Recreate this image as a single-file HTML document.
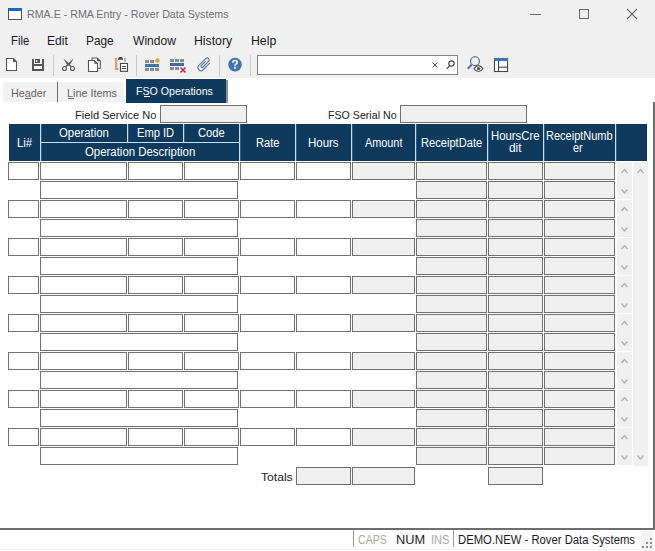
<!DOCTYPE html><html><head><meta charset='utf-8'><style>
*{margin:0;padding:0;box-sizing:border-box}
html,body{width:655px;height:551px;overflow:hidden;background:#fff;font-family:"Liberation Sans", sans-serif;}
.a{position:absolute}
.t{position:absolute;white-space:nowrap;line-height:1;transform-origin:0 0}
.inp{position:absolute;height:18px;border:1px solid #727272;background:#fff}
.g{background:#f0f0f0}
</style></head><body>
<div class='a' style='left:0;top:0;width:655px;height:78px;background:#f0f0f0'></div>
<div class='a' style='left:8px;top:8px;width:14px;height:12px;border:1px solid #555;border-top:3px solid #1f66c8;background:#fff'></div>
<div class='t' style='left:26.99px;top:8.51px;font-size:11.8px;color:#707070;transform:scaleX(0.9044);'>RMA.E - RMA Entry - Rover Data Systems</div>
<div class='a' style='left:530px;top:14px;width:11px;height:1px;background:#6a6a6a'></div>
<div class='a' style='left:579px;top:9px;width:10px;height:10px;border:1px solid #6a6a6a'></div>
<svg class='a' style='left:626px;top:8px' width='12' height='12'><path d='M1 1L11 11M11 1L1 11' stroke='#6a6a6a' stroke-width='1.1'/></svg>
<div class='t' style='left:10.89px;top:34.64px;font-size:12.0px;color:#1b1b1b;transform:scaleX(0.9472);'>File</div>
<div class='t' style='left:47.37px;top:34.64px;font-size:12.0px;color:#1b1b1b;transform:scaleX(1.0074);'>Edit</div>
<div class='t' style='left:85.90px;top:34.64px;font-size:12.0px;color:#1b1b1b;transform:scaleX(0.9876);'>Page</div>
<div class='t' style='left:132.62px;top:34.64px;font-size:12.0px;color:#1b1b1b;transform:scaleX(1.0063);'>Window</div>
<div class='t' style='left:194.26px;top:34.64px;font-size:12.0px;color:#1b1b1b;transform:scaleX(1.0222);'>History</div>
<div class='t' style='left:251.36px;top:34.64px;font-size:12.0px;color:#1b1b1b;transform:scaleX(1.0235);'>Help</div>

<svg class='a' style='left:0;top:50px' width='520' height='28' viewBox='0 50 520 28'>
 <!-- new doc -->
 <path d='M6.5 58.5H13.3L16.5 61.7V70.5H6.5Z' fill='#fff' stroke='#555' stroke-width='1.1'/>
 <path d='M13 58.5V62H16.5Z' fill='#555'/>
 <!-- save -->
 <rect x='32' y='59' width='12' height='12' fill='#555'/>
 <rect x='34' y='59' width='8' height='5' fill='#fff'/>
 <rect x='35' y='59' width='5' height='4' fill='#555'/>
 <rect x='36' y='60' width='1.2' height='2' fill='#fff'/>
 <rect x='34' y='66' width='8' height='3' fill='#fff'/>
 <!-- sep -->
 <rect x='53' y='55' width='1' height='21' fill='#c9c9c9'/>
 <!-- scissors -->
 <path d='M63.4 58.6L66.8 61.6L71.6 66L70.6 67L66.3 63.6Z' fill='#555'/>
 <path d='M73.6 58.6L70.2 61.6L65.4 66L66.4 67L70.7 63.6Z' fill='#555'/>
 <circle cx='64.5' cy='68.5' r='2' fill='none' stroke='#555' stroke-width='1.1'/>
 <circle cx='72.5' cy='68.5' r='2' fill='none' stroke='#555' stroke-width='1.1'/>
 <!-- copy -->
 <path d='M92 58H97.2L100.3 61.1V68.3H92Z' fill='#fff' stroke='#555' stroke-width='1.1'/>
 <path d='M97 58V61.3H100.3Z' fill='#555'/>
 <path d='M88.5 60.5H94.5L97.5 63.5V71.5H88.5Z' fill='#fff' stroke='#555' stroke-width='1.1'/>
 <path d='M94.3 60.5V63.7H97.5Z' fill='#555'/>
 <!-- paste -->
 <path d='M115 58H117.3V68H118.7V70H115Z' fill='#dba467'/>
 <rect x='124' y='58' width='2' height='4' fill='#d9b070'/>
 <path d='M118 59.8V58.5L119.2 57.1H121.8L123 58.5V59.8Z' fill='#454545'/>
 <rect x='120.5' y='63.5' width='7' height='7.8' fill='#fff' stroke='#3d4550' stroke-width='1.1'/>
 <rect x='122' y='66' width='4' height='1' fill='#4a4030'/>
 <rect x='122' y='68' width='4' height='1' fill='#4a4030'/>
 <!-- sep -->
 <rect x='136' y='55' width='1' height='21' fill='#c9c9c9'/>
 <!-- insert row -->
 <rect x='145' y='60' width='4' height='3' fill='#8c8c8c'/>
 <rect x='150' y='60' width='4' height='3' fill='#8c8c8c'/>
 <circle cx='157.5' cy='60.5' r='2.2' fill='#d4a84a'/>
 <rect x='145' y='64' width='14' height='3' fill='#3b75b5'/>
 <rect x='145' y='68' width='4' height='3' fill='#8c8c8c'/>
 <rect x='150' y='68' width='4' height='3' fill='#8c8c8c'/>
 <rect x='155' y='68' width='4' height='3' fill='#8c8c8c'/>
 <!-- delete row -->
 <rect x='170' y='59' width='4' height='3' fill='#8c8c8c'/>
 <rect x='175' y='59' width='4' height='3' fill='#8c8c8c'/>
 <rect x='180' y='59' width='4' height='3' fill='#8c8c8c'/>
 <rect x='170' y='63' width='14' height='3' fill='#3b6aa8'/>
 <rect x='170' y='67' width='4' height='3' fill='#8c8c8c'/>
 <rect x='175' y='67' width='4' height='3' fill='#8c8c8c'/>
 <path d='M180.5 67.5L185.5 72.5M185.5 67.5L180.5 72.5' stroke='#c42a40' stroke-width='1.6'/>
 <!-- paperclip -->
 <g transform='translate(204.2,64.3) rotate(-45)'>
  <path d='M-4.6 -3H5.1A2 2 0 0 1 5.1 1H-4.6Z' fill='#e3eefa'/>
  <path d='M5 3.1H-4.6A3.05 3.05 0 0 1 -4.6 -3H5.1A2 2 0 0 1 5.1 1H-2.8A1.1 1.1 0 0 1 -2.8 -1.2H3' fill='none' stroke='#63799a' stroke-width='1.15'/>
 </g>
 <!-- sep -->
 <rect x='219' y='55' width='1' height='21' fill='#c9c9c9'/>
 <!-- help -->
 <circle cx='235' cy='64.6' r='6.8' fill='#3f73b6'/>
 <path d='M232.8 62.6Q232.9 60.5 235 60.5Q237.2 60.5 237.2 62.4Q237.2 63.5 236 64.1Q235.1 64.6 235.1 65.8' fill='none' stroke='#fff' stroke-width='1.7'/>
 <rect x='234.1' y='66.8' width='2' height='1.9' fill='#fff'/>
 <!-- sep -->
 <rect x='250' y='55' width='1' height='21' fill='#c9c9c9'/>
 <!-- search box -->
 <rect x='257.5' y='55.5' width='200' height='19' fill='#fff' stroke='#858585' stroke-width='1'/>
 <path d='M432.5 62.5L437.5 67.5M437.5 62.5L432.5 67.5' stroke='#555' stroke-width='1'/>
 <circle cx='451.5' cy='63.6' r='2.7' fill='none' stroke='#444' stroke-width='1.1'/>
 <path d='M449.5 65.8L446.6 68.8' stroke='#444' stroke-width='1.2'/>
 <!-- search eye -->
 <circle cx='475' cy='61.2' r='4.4' fill='#eef4fb' stroke='#606060' stroke-width='1.1'/>
 <path d='M471.6 64.8L467.8 68.8' stroke='#4a70a6' stroke-width='2'/>
 <path d='M474 68.6Q478.5 62.6 483 68.6Q478.5 74.4 474 68.6Z' fill='#fff' stroke='#555' stroke-width='1.1'/>
 <circle cx='478.5' cy='68.6' r='1.7' fill='#555'/>
 <!-- layout -->
 <rect x='494.5' y='58.5' width='13' height='13' fill='#fff' stroke='#454545' stroke-width='1.1'/>
 <rect x='494' y='58' width='14' height='3' fill='#3b75b5'/>
 <rect x='498' y='61' width='1.1' height='10' fill='#454545'/>
 <rect x='499' y='66.6' width='9' height='1.1' fill='#454545'/>
</svg>

<div class='a' style='left:0;top:78px;width:655px;height:450px;background:#fff'></div>
<div class='a' style='left:3px;top:82px;width:54px;height:20px;background:#f2f2f2'></div>
<div class='a' style='left:57px;top:82px;width:1px;height:20px;background:#6a6a6a'></div>
<div class='a' style='left:58px;top:82px;width:66px;height:20px;background:#f2f2f2'></div>
<div class='t' style='left:10.60px;top:87.86px;font-size:11.5px;color:#646464;transform:scaleX(0.9384);'>Header</div>
<div class='t' style='left:66.70px;top:88.16px;font-size:11.5px;color:#646464;transform:scaleX(0.9398);'>Line Items</div>
<div class='a' style='left:25px;top:98px;width:6px;height:1px;background:#646464'></div>
<div class='a' style='left:68px;top:98px;width:6px;height:1px;background:#646464'></div>
<div class='a' style='left:226px;top:80px;width:2px;height:23px;background:#8a939c'></div>
<div class='a' style='left:126px;top:79px;width:100px;height:24px;background:#0f3a5e'></div>
<div class='t' style='left:135.99px;top:86.46px;font-size:11.5px;color:#ffffff;transform:scaleX(0.9252);'>FSO Operations</div>
<div class='a' style='left:144px;top:96px;width:6px;height:1px;background:#fff'></div>
<div class='t' style='left:74.98px;top:110.06px;font-size:11.5px;color:#222222;transform:scaleX(0.9652);'>Field Service No</div>
<div class='inp g' style='left:160px;top:105px;width:87px;height:18px'></div>
<div class='t' style='left:327.71px;top:109.96px;font-size:11.5px;color:#222222;transform:scaleX(0.9249);'>FSO Serial No</div>
<div class='inp g' style='left:400px;top:105px;width:127px;height:18px'></div>
<div class='a' style='left:9px;top:124px;width:638px;height:37px;background:#0f3a5e'></div>
<div class='a' style='left:40px;top:124px;width:1px;height:37px;background:#c8e0f4'></div><div class='a' style='left:41px;top:124px;width:1px;height:37px;background:#2f5d88'></div>
<div class='a' style='left:239px;top:124px;width:1px;height:37px;background:#c8e0f4'></div><div class='a' style='left:240px;top:124px;width:1px;height:37px;background:#2f5d88'></div>
<div class='a' style='left:295px;top:124px;width:1px;height:37px;background:#c8e0f4'></div><div class='a' style='left:296px;top:124px;width:1px;height:37px;background:#2f5d88'></div>
<div class='a' style='left:351px;top:124px;width:1px;height:37px;background:#c8e0f4'></div><div class='a' style='left:352px;top:124px;width:1px;height:37px;background:#2f5d88'></div>
<div class='a' style='left:415px;top:124px;width:1px;height:37px;background:#c8e0f4'></div><div class='a' style='left:416px;top:124px;width:1px;height:37px;background:#2f5d88'></div>
<div class='a' style='left:487px;top:124px;width:1px;height:37px;background:#c8e0f4'></div><div class='a' style='left:488px;top:124px;width:1px;height:37px;background:#2f5d88'></div>
<div class='a' style='left:543px;top:124px;width:1px;height:37px;background:#c8e0f4'></div><div class='a' style='left:544px;top:124px;width:1px;height:37px;background:#2f5d88'></div>
<div class='a' style='left:615px;top:124px;width:1px;height:37px;background:#c8e0f4'></div><div class='a' style='left:616px;top:124px;width:1px;height:37px;background:#2f5d88'></div>
<div class='a' style='left:127px;top:124px;width:1px;height:18px;background:#c8e0f4'></div><div class='a' style='left:128px;top:124px;width:1px;height:18px;background:#2f5d88'></div>
<div class='a' style='left:183px;top:124px;width:1px;height:18px;background:#c8e0f4'></div><div class='a' style='left:184px;top:124px;width:1px;height:18px;background:#2f5d88'></div>
<div class='a' style='left:40px;top:142px;width:200px;height:1px;background:#c8e0f4'></div>
<div class='t' style='left:16.90px;top:136.59px;font-size:12.3px;color:#ffffff;transform:scaleX(0.9207);'>Li#</div>
<div class='t' style='left:58.52px;top:126.79px;font-size:12.3px;color:#ffffff;transform:scaleX(0.9249);'>Operation</div>
<div class='t' style='left:136.51px;top:126.79px;font-size:12.3px;color:#ffffff;transform:scaleX(0.9055);'>Emp ID</div>
<div class='t' style='left:197.60px;top:126.79px;font-size:12.3px;color:#ffffff;transform:scaleX(0.9098);'>Code</div>
<div class='t' style='left:84.61px;top:145.79px;font-size:12.3px;color:#ffffff;transform:scaleX(0.9272);'>Operation Description</div>
<div class='t' style='left:255.52px;top:137.39px;font-size:12.3px;color:#ffffff;transform:scaleX(0.8987);'>Rate</div>
<div class='t' style='left:308.13px;top:137.39px;font-size:12.3px;color:#ffffff;transform:scaleX(0.9326);'>Hours</div>
<div class='t' style='left:364.71px;top:137.39px;font-size:12.3px;color:#ffffff;transform:scaleX(0.8830);'>Amount</div>
<div class='t' style='left:420.91px;top:137.09px;font-size:12.3px;color:#ffffff;transform:scaleX(0.9045);'>ReceiptDate</div>
<div class='t' style='left:490.69px;top:129.59px;font-size:12.3px;color:#ffffff;transform:scaleX(0.9222);'>HoursCre</div>
<div class='t' style='left:508.64px;top:141.59px;font-size:12.3px;color:#ffffff;transform:scaleX(0.9621);'>dit</div>
<div class='t' style='left:545.53px;top:129.59px;font-size:12.3px;color:#ffffff;transform:scaleX(0.8947);'>ReceiptNumb</div>
<div class='t' style='left:573.40px;top:141.59px;font-size:12.3px;color:#ffffff;transform:scaleX(0.8711);'>er</div>
<div class='inp' style='left:8px;top:162px;width:31px'></div>
<div class='inp' style='left:40px;top:162px;width:87px'></div>
<div class='inp' style='left:128px;top:162px;width:55px'></div>
<div class='inp' style='left:184px;top:162px;width:55px'></div>
<div class='inp' style='left:240px;top:162px;width:55px'></div>
<div class='inp' style='left:296px;top:162px;width:55px'></div>
<div class='inp g' style='left:352px;top:162px;width:63px'></div>
<div class='inp g' style='left:416px;top:162px;width:71px'></div>
<div class='inp g' style='left:488px;top:162px;width:55px'></div>
<div class='inp g' style='left:544px;top:162px;width:71px'></div>
<div class='inp' style='left:40px;top:181px;width:198px'></div>
<div class='inp g' style='left:416px;top:181px;width:71px'></div>
<div class='inp g' style='left:488px;top:181px;width:55px'></div>
<div class='inp g' style='left:544px;top:181px;width:71px'></div>
<div class='inp' style='left:8px;top:200px;width:31px'></div>
<div class='inp' style='left:40px;top:200px;width:87px'></div>
<div class='inp' style='left:128px;top:200px;width:55px'></div>
<div class='inp' style='left:184px;top:200px;width:55px'></div>
<div class='inp' style='left:240px;top:200px;width:55px'></div>
<div class='inp' style='left:296px;top:200px;width:55px'></div>
<div class='inp g' style='left:352px;top:200px;width:63px'></div>
<div class='inp g' style='left:416px;top:200px;width:71px'></div>
<div class='inp g' style='left:488px;top:200px;width:55px'></div>
<div class='inp g' style='left:544px;top:200px;width:71px'></div>
<div class='inp' style='left:40px;top:219px;width:198px'></div>
<div class='inp g' style='left:416px;top:219px;width:71px'></div>
<div class='inp g' style='left:488px;top:219px;width:55px'></div>
<div class='inp g' style='left:544px;top:219px;width:71px'></div>
<div class='inp' style='left:8px;top:238px;width:31px'></div>
<div class='inp' style='left:40px;top:238px;width:87px'></div>
<div class='inp' style='left:128px;top:238px;width:55px'></div>
<div class='inp' style='left:184px;top:238px;width:55px'></div>
<div class='inp' style='left:240px;top:238px;width:55px'></div>
<div class='inp' style='left:296px;top:238px;width:55px'></div>
<div class='inp g' style='left:352px;top:238px;width:63px'></div>
<div class='inp g' style='left:416px;top:238px;width:71px'></div>
<div class='inp g' style='left:488px;top:238px;width:55px'></div>
<div class='inp g' style='left:544px;top:238px;width:71px'></div>
<div class='inp' style='left:40px;top:257px;width:198px'></div>
<div class='inp g' style='left:416px;top:257px;width:71px'></div>
<div class='inp g' style='left:488px;top:257px;width:55px'></div>
<div class='inp g' style='left:544px;top:257px;width:71px'></div>
<div class='inp' style='left:8px;top:276px;width:31px'></div>
<div class='inp' style='left:40px;top:276px;width:87px'></div>
<div class='inp' style='left:128px;top:276px;width:55px'></div>
<div class='inp' style='left:184px;top:276px;width:55px'></div>
<div class='inp' style='left:240px;top:276px;width:55px'></div>
<div class='inp' style='left:296px;top:276px;width:55px'></div>
<div class='inp g' style='left:352px;top:276px;width:63px'></div>
<div class='inp g' style='left:416px;top:276px;width:71px'></div>
<div class='inp g' style='left:488px;top:276px;width:55px'></div>
<div class='inp g' style='left:544px;top:276px;width:71px'></div>
<div class='inp' style='left:40px;top:295px;width:198px'></div>
<div class='inp g' style='left:416px;top:295px;width:71px'></div>
<div class='inp g' style='left:488px;top:295px;width:55px'></div>
<div class='inp g' style='left:544px;top:295px;width:71px'></div>
<div class='inp' style='left:8px;top:314px;width:31px'></div>
<div class='inp' style='left:40px;top:314px;width:87px'></div>
<div class='inp' style='left:128px;top:314px;width:55px'></div>
<div class='inp' style='left:184px;top:314px;width:55px'></div>
<div class='inp' style='left:240px;top:314px;width:55px'></div>
<div class='inp' style='left:296px;top:314px;width:55px'></div>
<div class='inp g' style='left:352px;top:314px;width:63px'></div>
<div class='inp g' style='left:416px;top:314px;width:71px'></div>
<div class='inp g' style='left:488px;top:314px;width:55px'></div>
<div class='inp g' style='left:544px;top:314px;width:71px'></div>
<div class='inp' style='left:40px;top:333px;width:198px'></div>
<div class='inp g' style='left:416px;top:333px;width:71px'></div>
<div class='inp g' style='left:488px;top:333px;width:55px'></div>
<div class='inp g' style='left:544px;top:333px;width:71px'></div>
<div class='inp' style='left:8px;top:352px;width:31px'></div>
<div class='inp' style='left:40px;top:352px;width:87px'></div>
<div class='inp' style='left:128px;top:352px;width:55px'></div>
<div class='inp' style='left:184px;top:352px;width:55px'></div>
<div class='inp' style='left:240px;top:352px;width:55px'></div>
<div class='inp' style='left:296px;top:352px;width:55px'></div>
<div class='inp g' style='left:352px;top:352px;width:63px'></div>
<div class='inp g' style='left:416px;top:352px;width:71px'></div>
<div class='inp g' style='left:488px;top:352px;width:55px'></div>
<div class='inp g' style='left:544px;top:352px;width:71px'></div>
<div class='inp' style='left:40px;top:371px;width:198px'></div>
<div class='inp g' style='left:416px;top:371px;width:71px'></div>
<div class='inp g' style='left:488px;top:371px;width:55px'></div>
<div class='inp g' style='left:544px;top:371px;width:71px'></div>
<div class='inp' style='left:8px;top:390px;width:31px'></div>
<div class='inp' style='left:40px;top:390px;width:87px'></div>
<div class='inp' style='left:128px;top:390px;width:55px'></div>
<div class='inp' style='left:184px;top:390px;width:55px'></div>
<div class='inp' style='left:240px;top:390px;width:55px'></div>
<div class='inp' style='left:296px;top:390px;width:55px'></div>
<div class='inp g' style='left:352px;top:390px;width:63px'></div>
<div class='inp g' style='left:416px;top:390px;width:71px'></div>
<div class='inp g' style='left:488px;top:390px;width:55px'></div>
<div class='inp g' style='left:544px;top:390px;width:71px'></div>
<div class='inp' style='left:40px;top:409px;width:198px'></div>
<div class='inp g' style='left:416px;top:409px;width:71px'></div>
<div class='inp g' style='left:488px;top:409px;width:55px'></div>
<div class='inp g' style='left:544px;top:409px;width:71px'></div>
<div class='inp' style='left:8px;top:428px;width:31px'></div>
<div class='inp' style='left:40px;top:428px;width:87px'></div>
<div class='inp' style='left:128px;top:428px;width:55px'></div>
<div class='inp' style='left:184px;top:428px;width:55px'></div>
<div class='inp' style='left:240px;top:428px;width:55px'></div>
<div class='inp' style='left:296px;top:428px;width:55px'></div>
<div class='inp g' style='left:352px;top:428px;width:63px'></div>
<div class='inp g' style='left:416px;top:428px;width:71px'></div>
<div class='inp g' style='left:488px;top:428px;width:55px'></div>
<div class='inp g' style='left:544px;top:428px;width:71px'></div>
<div class='inp' style='left:40px;top:447px;width:198px'></div>
<div class='inp g' style='left:416px;top:447px;width:71px'></div>
<div class='inp g' style='left:488px;top:447px;width:55px'></div>
<div class='inp g' style='left:544px;top:447px;width:71px'></div>
<div class='a' style='left:617px;top:162px;width:15px;height:37px;background:#f0f0f0'></div>
<div class='a' style='left:617px;top:200px;width:15px;height:37px;background:#f0f0f0'></div>
<div class='a' style='left:617px;top:238px;width:15px;height:37px;background:#f0f0f0'></div>
<div class='a' style='left:617px;top:276px;width:15px;height:37px;background:#f0f0f0'></div>
<div class='a' style='left:617px;top:314px;width:15px;height:37px;background:#f0f0f0'></div>
<div class='a' style='left:617px;top:352px;width:15px;height:37px;background:#f0f0f0'></div>
<div class='a' style='left:617px;top:390px;width:15px;height:37px;background:#f0f0f0'></div>
<div class='a' style='left:617px;top:428px;width:15px;height:37px;background:#f0f0f0'></div>
<div class='a' style='left:633px;top:162px;width:15px;height:304px;background:#f0f0f0'></div>
<svg class='a' style='left:0;top:0' width='655' height='551'><g fill='none' stroke='#b0b0b0' stroke-width='1.4'><path d='M621.5 173L624.5 169.5L627.5 173' /><path d='M621.5 189.5L624.5 193L627.5 189.5' /><path d='M621.5 211L624.5 207.5L627.5 211' /><path d='M621.5 227.5L624.5 231L627.5 227.5' /><path d='M621.5 249L624.5 245.5L627.5 249' /><path d='M621.5 265.5L624.5 269L627.5 265.5' /><path d='M621.5 287L624.5 283.5L627.5 287' /><path d='M621.5 303.5L624.5 307L627.5 303.5' /><path d='M621.5 325L624.5 321.5L627.5 325' /><path d='M621.5 341.5L624.5 345L627.5 341.5' /><path d='M621.5 363L624.5 359.5L627.5 363' /><path d='M621.5 379.5L624.5 383L627.5 379.5' /><path d='M621.5 401L624.5 397.5L627.5 401' /><path d='M621.5 417.5L624.5 421L627.5 417.5' /><path d='M621.5 439L624.5 435.5L627.5 439' /><path d='M621.5 455.5L624.5 459L627.5 455.5' /><path d='M637.5 173L640.5 169.5L643.5 173' /><path d='M637.5 455.5L640.5 459L643.5 455.5' /></g></svg>
<div class='t' style='left:260.79px;top:471.71px;font-size:11.8px;color:#222222;transform:scaleX(1.0273);'>Totals</div>
<div class='inp g' style='left:296px;top:467px;width:55px'></div>
<div class='inp g' style='left:352px;top:467px;width:63px'></div>
<div class='inp g' style='left:488px;top:467px;width:55px'></div>
<div class='a' style='left:653px;top:102px;width:2px;height:427px;background:#6e6e6e'></div>
<div class='a' style='left:0;top:528px;width:655px;height:2px;background:#6e6e6e'></div>
<div class='a' style='left:0;top:549px;width:655px;height:1px;background:#efefef'></div>
<div class='a' style='left:353px;top:530px;width:1px;height:17px;background:#9a9a9a'></div>
<div class='a' style='left:453px;top:530px;width:1px;height:17px;background:#9a9a9a'></div>
<div class='t' style='left:358.12px;top:533.84px;font-size:12.0px;color:#a8a8a8;transform:scaleX(0.8819);'>CAPS</div>
<div class='t' style='left:395.51px;top:533.84px;font-size:12.0px;color:#1b1b1b;transform:scaleX(1.0655);'>NUM</div>
<div class='t' style='left:430.64px;top:533.84px;font-size:12.0px;color:#a8a8a8;transform:scaleX(0.9260);'>INS</div>
<div class='t' style='left:457.70px;top:533.84px;font-size:12.0px;color:#1b1b1b;transform:scaleX(0.9413);'>DEMO.NEW - Rover Data Systems</div>
<div class='a' style='left:641px;top:531px;width:12px;height:20px;background:#f3f3f3'></div>
<div class='a' style='left:650px;top:538px;width:2px;height:2px;background:#8a8a8a'></div>
<div class='a' style='left:646px;top:542px;width:2px;height:2px;background:#8a8a8a'></div>
<div class='a' style='left:650px;top:542px;width:2px;height:2px;background:#8a8a8a'></div>
<div class='a' style='left:642px;top:546px;width:2px;height:2px;background:#8a8a8a'></div>
<div class='a' style='left:646px;top:546px;width:2px;height:2px;background:#8a8a8a'></div>
<div class='a' style='left:650px;top:546px;width:2px;height:2px;background:#8a8a8a'></div>
</body></html>
